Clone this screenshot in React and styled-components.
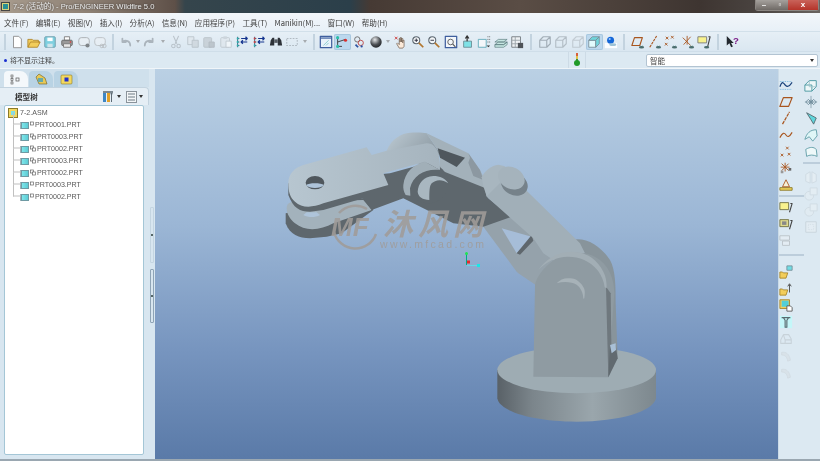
import React from "react";
import styled, { createGlobalStyle } from "styled-components";

const GlobalStyle = createGlobalStyle`
  html, body { margin: 0; padding: 0; height: 100%; overflow: hidden; background: #dfeaf3; }
  #root { height: 100%; }
  * { box-sizing: border-box; }
`;

const cjk = `"Noto Sans CJK SC", "Noto Sans", sans-serif`;

const Window = styled.div`
  width: 820px;
  height: 461px;
  display: flex;
  flex-direction: column;
  font-family: ${cjk};
  color: #444;
  background: #dfeaf3;
  filter: blur(0.35px);
  overflow: hidden;
`;

const TitleBar = styled.div`
  height: 13px;
  flex-shrink: 0;
  display: flex;
  align-items: center;
  padding-left: 1px;
  gap: 3px;
  background: linear-gradient(90deg, #a89c8e 0, #8d8074 90px, #5e5048 175px, #35454c 185px, #2b3f4a 350px, #463a34 370px, #5a4d45 520px, #3e3531 700px, #4a4441 760px, #6a6460 820px);
`;

const TitleText = styled.span`
  font: 7.6px/13px "Liberation Sans", ${cjk};
  color: #efefef;
  text-shadow: 0 0 2px #2a2a2a;
  white-space: nowrap;
`;

const WinControls = styled.div`
  margin-left: auto;
  margin-right: 1px;
  display: flex;
  align-self: flex-start;
  height: 11px;
  border: 1px solid #8b8682;
  border-top: 0;
  border-radius: 0 0 3px 3px;
`;

const WinButton = styled.div`
  width: ${(p) => (p.$close ? "30px" : "16px")};
  display: flex;
  align-items: center;
  justify-content: center;
  color: #fff;
  font: bold 8px/10px "Liberation Sans", sans-serif;
  background: ${(p) => (p.$close ? "linear-gradient(#c9635a, #b5342a)" : "linear-gradient(#a5a19d, #6f6a66)")};
`;

const MenuBar = styled.div`
  height: 18px;
  flex-shrink: 0;
  display: flex;
  align-items: center;
  padding-left: 4px;
  gap: 7.25px;
  background: linear-gradient(#f2f6fa, #e8f0f7);
  font-size: 7.6px;
  color: #3f3f3f;
`;

const ToolRow = styled.div`
  height: 20px;
  flex-shrink: 0;
  display: flex;
  align-items: center;
  padding-left: 1px;
  background: linear-gradient(#e6eff6, #dae7f1);
  border-top: 1px solid #d2e0ea;
`;

const ToolButton = styled.div`
  width: ${(p) => p.$w || 16.6}px;
  height: 16px;
  flex-shrink: 0;
  display: flex;
  align-items: center;
  justify-content: center;
  border-radius: 2px;
  background: ${(p) => (p.$active ? "#bcd8ee" : "transparent")};
  box-shadow: ${(p) => (p.$active ? "inset 0 0 0 1px #a9c8df" : "none")};
  opacity: ${(p) => (p.$dim ? 0.55 : 1)};
`;

const Sep = styled.div`
  width: 2px;
  height: 16px;
  margin: 0 ${(p) => p.$m || 3}px;
  flex-shrink: 0;
  background: #c3d3df;
`;

const StatusRow = styled.div`
  height: 18px;
  flex-shrink: 0;
  display: flex;
  align-items: center;
  padding-left: 4px;
  font-size: 7px;
  color: #444;
  background: #dce9f2;
  border-top: 1px solid #cfdee9;
  border-bottom: 1px solid #f0f5f9;
`;

const Dot = styled.span`
  width: 3px;
  height: 3px;
  margin-right: 3px;
  border-radius: 50%;
  background: #1a2fd0;
`;

const LightCell = styled.div`
  margin-left: auto;
  width: 18px;
  height: 16px;
  display: flex;
  justify-content: center;
  border-left: 1px solid #cddbe6;
  border-right: 1px solid #cddbe6;
`;

const Combo = styled.div`
  width: 172px;
  height: 13px;
  margin: 0 2px 0 60px;
  padding: 0 3px;
  display: flex;
  align-items: center;
  justify-content: space-between;
  background: #fff;
  border: 1px solid #b3c4d2;
  border-radius: 2px;
  font-size: 7.6px;
`;

const Caret = styled.span`
  width: 0;
  height: 0;
  border: 2px solid transparent;
  border-top: 3px solid ${(p) => p.$c || "#333"};
  border-bottom: 0;
  flex-shrink: 0;
`;

const Workspace = styled.div`
  flex: 1;
  min-height: 0;
  display: flex;
`;

const Sidebar = styled.div`
  width: 155px;
  flex-shrink: 0;
  display: flex;
  background: #d8e6f0;
`;

const SidePanel = styled.div`
  width: 149px;
  display: flex;
  flex-direction: column;
`;

const Tabs = styled.div`
  height: 18px;
  display: flex;
  padding: 2px 0 0 4px;
  gap: 1px;
  background: #cfe0ec;
`;

const Tab = styled.div`
  width: 24px;
  display: flex;
  align-items: center;
  justify-content: center;
  border-radius: 4px 8px 0 0;
  background: ${(p) => (p.$active ? "#f4f8fb" : "#b9d3e4")};
`;

const PanelHead = styled.div`
  height: 18px;
  display: flex;
  align-items: center;
  padding: 0 5px 0 15px;
  background: #e5eef5;
  border-top: 1px solid #c3d3df;
  border-right: 1px solid #c3d3df;
  border-radius: 0 4px 0 0;
`;

const HeadTitle = styled.span`
  font-size: 7.6px;
  font-weight: 700;
  color: #333;
  margin-right: auto;
`;

const HeadTool = styled.div`
  display: flex;
  align-items: center;
  gap: 2px;
  margin-left: 5px;
`;

const TreeBox = styled.div`
  flex: 1;
  min-height: 0;
  margin: 0 5px 4px 4px;
  padding: 1px 0 0 3px;
  background: #fff;
  border: 1px solid #a4c6d6;
  border-radius: 2px;
`;

const TreeRow = styled.div`
  height: 12px;
  display: flex;
  align-items: center;
  padding-left: ${(p) => (p.$root ? 0 : 5)}px;
  font: 7.1px/12px "Liberation Sans", sans-serif;
  color: #5a5a5a;
`;

const RootGlyph = styled.svg`
  margin-right: 2px;
  flex-shrink: 0;
`;

const LinkGlyph = styled.svg`
  margin-left: 1px;
  flex-shrink: 0;
`;

const Branch = styled.span`
  width: 8px;
  height: 12px;
  flex-shrink: 0;
  margin-top: -12px;
  border-left: 1px solid #c0c0c0;
  border-bottom: 1px solid #c0c0c0;
  transform: translateY(-0.5px);
`;

const PartGlyph = styled.span`
  width: 8px;
  height: 7px;
  flex-shrink: 0;
  background: linear-gradient(90deg, #7fe6ea, #5ccbd4);
  border: 1px solid #6f9aa3;
  box-shadow: -1px 0 0 #9fb1b8;
`;

const Sash = styled.div`
  flex: 1;
  display: flex;
  flex-direction: column;
  align-items: center;
  padding-top: 138px;
  gap: 6px;
`;

const SashHandle = styled.div`
  width: 4px;
  height: ${(p) => (p.$strong ? 54 : 56)}px;
  display: flex;
  align-items: center;
  justify-content: center;
  border: 1px solid ${(p) => (p.$strong ? "#8fa4b6" : "#c4d5e1")};
  border-radius: 1px;
`;

const SashDot = styled.span`
  width: 2px;
  height: 2px;
  background: #566;
`;

const Viewport = styled.div`
  flex: 1;
  min-width: 0;
  height: 390px;
  background: linear-gradient(#bad0e4 0, #9bb6d5 40%, #7795bf 72%, #5a7aa8 100%);
`;

const Scene = styled.svg`
  display: block;
  width: 623px;
  height: 390px;
`;

const Rail = styled.div`
  width: 42px;
  flex-shrink: 0;
  display: flex;
  gap: 10px;
  padding-top: 8px;
  background: #dce9f2;
  border-left: 1px solid #cbdbe7;
`;

const RailCol = styled.div`
  width: ${(p) => p.$w}px;
  display: flex;
  flex-direction: column;
  align-items: center;
`;

const RailBtn = styled.div`
  width: 16px;
  height: 16.6px;
  flex-shrink: 0;
  display: flex;
  align-items: center;
  justify-content: center;
  opacity: ${(p) => (p.$dim ? 0.4 : 1)};
`;

const RailDiv = styled.div`
  width: ${(p) => p.$w}px;
  height: 2px;
  flex-shrink: 0;
  align-self: flex-start;
  margin: ${(p) => p.$m};
  background: #bccddb;
`;

const BottomEdge = styled.div`
  height: 2px;
  flex-shrink: 0;
  background: #9aa7b1;
`;

/* toolbar and rail pictures, all on a 16 unit grid */
const I = ({ children, s = 14 }) => (
  <svg width={s} height={s} viewBox="0 0 16 16" fill="none" strokeLinejoin="round">
    {children}
  </svg>
);

const cube = (c = "#7d8a94", fill = "none") => (
  <path d="M2 6h8v8H2zM2 6l4-4h8v8l-4 4M10 6l4-4" stroke={c} strokeWidth="1.3" fill={fill} />
);

const datum = (d) => (
  <>
    {d}
    <path d="M10 11l2 2 2-2-2 3z" fill="#2f7f7a" />
    <ellipse cx="12" cy="14" rx="3" ry="1.4" fill="#4b6e6e" />
  </>
);

const icons = {
  new: <path d="M4 1.5h6l3 3v10H4z" fill="#fff" stroke="#8a8a8a" />,
  open: <path d="M1 5h5l1 1h6v2h2l-3 6H1zM1 14l3-6h11" fill="#f2cd5b" stroke="#b0862a" />,
  save: (
    <>
      <rect x="2" y="2" width="12" height="12" rx="1" fill="#7fd0e0" stroke="#6a9aa8" />
      <rect x="5" y="3" width="6" height="4" fill="#fff" />
      <rect x="5" y="10" width="6" height="4" fill="#cfe4ea" />
    </>
  ),
  print: (
    <>
      <path d="M5 2h6v4H5z" fill="#fff" stroke="#777" />
      <rect x="2" y="6" width="12" height="6" rx="1" fill="#9a9a9a" stroke="#666" />
      <rect x="4" y="10" width="8" height="4" fill="#e8e8e8" stroke="#777" />
      <circle cx="12" cy="8" r=".9" fill="#d33" />
    </>
  ),
  cam: (
    <>
      <rect x="2" y="3" width="12" height="9" rx="3" fill="#eef2f5" stroke="#777" />
      <circle cx="12" cy="12" r="2.4" fill="#333" />
    </>
  ),
  camDim: (
    <>
      <rect x="2" y="3" width="12" height="9" rx="3" fill="#eef2f5" stroke="#999" />
      <circle cx="10" cy="12.5" r="2" stroke="#999" />
      <circle cx="13" cy="12.5" r="2" stroke="#999" />
    </>
  ),
  undo: <path d="M14 12c0-5-5-7-9-4M5 8V4M5 8h4" stroke="#808890" strokeWidth="2" strokeLinecap="round" />,
  redo: <path d="M2 12c0-5 5-7 9-4M11 8V4M11 8H7" stroke="#808890" strokeWidth="2" strokeLinecap="round" />,
  cut: (
    <>
      <path d="M5 1l4 9M11 1L7 10" stroke="#9aa2a8" strokeWidth="1.3" />
      <circle cx="5" cy="12.5" r="2" stroke="#9aa2a8" strokeWidth="1.2" />
      <circle cx="11" cy="12.5" r="2" stroke="#9aa2a8" strokeWidth="1.2" />
    </>
  ),
  copy: (
    <>
      <rect x="2" y="2" width="7" height="9" fill="#dfe5ea" stroke="#9aa2a8" />
      <rect x="7" y="6" width="7" height="8" fill="#c5ccd2" stroke="#9aa2a8" />
    </>
  ),
  paste: (
    <>
      <rect x="2" y="3" width="9" height="11" rx="1" fill="#b8bfc5" stroke="#9aa2a8" />
      <rect x="8" y="8" width="6" height="6" fill="#a2a9af" stroke="#8e959b" />
    </>
  ),
  pasteSp: (
    <>
      <rect x="2" y="3" width="10" height="11" rx="1" fill="#dfe5ea" stroke="#a7aeb4" />
      <rect x="8" y="7" width="6" height="7" fill="#fff" stroke="#a7aeb4" />
      <rect x="5" y="1.5" width="4" height="3" fill="#bcc3c9" />
    </>
  ),
  regen: (
    <>
      <path d="M3 2v12M3 4h2M3 8h2M3 12h2" stroke="#357" />
      <path d="M2 3h2v2H2z" fill="#2ab6b0" />
      <path d="M2 7h2v2H2z" fill="#2ab6b0" />
      <path d="M2 11h2v2H2z" fill="#2ab6b0" />
      <path d="M7 4h7M12 2l2 2-2 2M14 8H7M9 6L7 8l2 2" stroke="#14348e" strokeWidth="1.4" />
    </>
  ),
  regenRed: (
    <>
      <path d="M3 2v12M3 4h2M3 8h2M3 12h2" stroke="#357" />
      <path d="M2 3h2v2H2z" fill="#d23b3b" />
      <path d="M2 7h2v2H2z" fill="#d23b3b" />
      <path d="M2 11h2v2H2z" fill="#2ab6b0" />
      <path d="M7 4h7M12 2l2 2-2 2M14 8H7M9 6L7 8l2 2" stroke="#14348e" strokeWidth="1.4" />
    </>
  ),
  binoculars: (
    <>
      <path d="M2 6l2-3h2v9H1zM14 6l-2-3h-2v9h5z" fill="#2d3238" />
      <rect x="6" y="5" width="4" height="4" fill="#555b62" />
    </>
  ),
  select: <rect x="2" y="4" width="12" height="8" stroke="#8a939b" strokeWidth="1.2" strokeDasharray="2 1.4" />,
  frame: (
    <>
      <rect x="1.5" y="1.5" width="13" height="13" fill="#e9f2fa" stroke="#3f5f9e" strokeWidth="1.4" />
      <path d="M2 3.5h12" stroke="#3f5f9e" strokeWidth="1.4" />
      <path d="M5 12l6-6M8 12l3-3" stroke="#7fc7c9" />
    </>
  ),
  axes: (
    <>
      <path d="M3 3v10h5M3 8l9-3" stroke="#333" />
      <circle cx="3" cy="3" r="1.8" fill="#2bbfa8" />
      <circle cx="3" cy="13" r="1.8" fill="#2bbfa8" />
      <circle cx="12" cy="6" r="1.8" fill="#d93030" />
    </>
  ),
  csys: (
    <>
      <circle cx="6" cy="5" r="3" stroke="#666" />
      <circle cx="10" cy="9" r="3" stroke="#bb4444" />
      <path d="M4 11l3 3" stroke="#2a50a0" strokeWidth="2" />
      <circle cx="11" cy="13" r="1.3" fill="#2a50a0" />
    </>
  ),
  sphere: (
    <>
      <defs>
        <radialGradient id="sph" cx=".4" cy=".3" r=".8">
          <stop offset="0" stopColor="#e6e8ea" />
          <stop offset=".55" stopColor="#4c5054" />
          <stop offset="1" stopColor="#15171a" />
        </radialGradient>
      </defs>
      <circle cx="8" cy="8" r="6.5" fill="url(#sph)" />
    </>
  ),
  hand: (
    <>
      <path d="M6 15l-3-5 1-1 2 2V4h1v4-5h1.5v5-4H10v5-3h1.5v7L10 15z" fill="#fbe9d8" stroke="#6b5a4c" strokeWidth=".8" />
      <path d="M1 2l3 3M4 2L1 5" stroke="#c33" />
    </>
  ),
  zoomIn: (
    <>
      <circle cx="6" cy="6" r="4" fill="#f3f6f8" stroke="#5c6770" strokeWidth="1.2" />
      <path d="M9 9l5 5" stroke="#b2762e" strokeWidth="2" />
      <path d="M4 6h4M6 4v4" stroke="#223" />
    </>
  ),
  zoomOut: (
    <>
      <circle cx="6" cy="6" r="4" fill="#f3f6f8" stroke="#5c6770" strokeWidth="1.2" />
      <path d="M9 9l5 5" stroke="#b2762e" strokeWidth="2" />
      <path d="M4 6h4" stroke="#223" />
    </>
  ),
  refit: (
    <>
      <rect x="1.5" y="1.5" width="13" height="13" fill="#f2f6fa" stroke="#3f5f9e" strokeWidth="1.4" />
      <circle cx="7.5" cy="8" r="3.2" stroke="#555" />
      <path d="M10 10.5l3 3" stroke="#555" strokeWidth="1.4" />
    </>
  ),
  orient: (
    <>
      <rect x="3" y="7" width="9" height="7" fill="#7fe1e6" stroke="#6a8d95" />
      <path d="M7 7V2M5 4l2-3 2 3" stroke="#333" strokeWidth="1.4" />
    </>
  ),
  views: (
    <>
      <rect x="1.5" y="5" width="9" height="9" fill="#f4f7fa" stroke="#5ea8b8" />
      <path d="M12 2h3M12 5h3M12 8h3" stroke="#555" strokeDasharray="1 1" />
      <path d="M11 12l2 2 2-2z" fill="#333" />
    </>
  ),
  layers: <path d="M1 8l4-3h10l-4 3zM1 11l4-3h10l-4 3zM1 14l0-3 10 0 4-3v3l-4 3z" fill="#c6e6e2" stroke="#5f7f82" strokeWidth=".8" />,
  table: (
    <>
      <rect x="2" y="2" width="10" height="12" fill="#eef1f4" stroke="#71787e" />
      <path d="M2 6h10M2 10h10M6 2v12" stroke="#9aa2a8" />
      <rect x="9" y="9" width="6" height="6" fill="#4e5358" />
    </>
  ),
  wire: cube("#6f7b85"),
  hidden: cube("#909aa2"),
  noHidden: cube("#a9b1b8"),
  shaded: (
    <>
      <path d="M2 6h8v8H2z" fill="#e2fbfd" stroke="#7d8f99" />
      <path d="M2 6l4-4h8l-4 4zM10 6l4-4v8l-4 4z" fill="#6fd6dd" stroke="#7d8f99" />
    </>
  ),
  spot: (
    <>
      <rect x="1" y="9" width="14" height="6" fill="#fbfdff" />
      <circle cx="7.5" cy="6" r="4" fill="#1467d8" />
      <circle cx="6.5" cy="4.5" r="1.2" fill="#9cc8ff" />
      <ellipse cx="10" cy="11" rx="4" ry="1.5" fill="#9dc3d6" />
    </>
  ),
  dPlane: datum(<path d="M1 12L4 3h9l-3 9z" fill="none" stroke="#a8551e" strokeWidth="1.3" />),
  dAxis: datum(<path d="M2 14L10 1" stroke="#a8551e" strokeWidth="1.3" strokeDasharray="3 1" />),
  dPoint: datum(<path d="M2 2l3 3M5 2L2 5M8 1l3 3M11 1L8 4M1 9l3 3M4 9l-3 3" stroke="#a8551e" />),
  dCsys: datum(<path d="M2 3l9 9M11 2l-8 9M7 1v10" stroke="#a8551e" />),
  note: (
    <>
      <rect x="1" y="2" width="10" height="7" fill="#f8f28e" stroke="#777" />
      <path d="M13 2h2l-3 12" stroke="#444" strokeWidth="1.2" />
      <ellipse cx="11" cy="14" rx="3" ry="1.4" fill="#4b6e6e" />
    </>
  ),
  help: (
    <>
      <path d="M2 1v11l3-2.5L7 14l2-1-2-4h3z" fill="#22282e" />
      <text x="9" y="10" fontFamily="Liberation Sans" fontWeight="700" fontSize="11" fill="#7a1a86">?</text>
    </>
  ),
  sketch: (
    <>
      <path d="M1 10c3-8 4-4 6-2s4 3 8-3" stroke="#18407a" strokeWidth="1.3" />
      <path d="M1 13h14M1 4h14" stroke="#6fb2de" strokeDasharray="1 1" />
    </>
  ),
  railPlane: <path d="M1 13L5 3h10l-4 10z" stroke="#a8551e" strokeWidth="1.4" />,
  railAxis: <path d="M4 15L12 1" stroke="#a8551e" strokeWidth="1.4" strokeDasharray="4 1" />,
  curve: <path d="M1 11c3-6 5-6 7-3s4 2 7-3" stroke="#a8551e" strokeWidth="1.3" />,
  pts: <path d="M8 2l3 3M11 2L8 5M2 10l3 3M5 10l-3 3M10 9l3 3M13 9l-3 3" stroke="#a8551e" />,
  spark: (
    <>
      <path d="M7 2v10M2 7h10M3 3l8 8M11 3l-8 8" stroke="#a8551e" />
      <rect x="11" y="8" width="3" height="3" fill="#666" />
      <rect x="2" y="11" width="3" height="3" fill="#999" />
    </>
  ),
  weld: (
    <>
      <rect x="1" y="11" width="14" height="3" fill="#ecd05a" stroke="#8b7a2a" />
      <path d="M8 2l-4 8h8z" fill="#f5f0d8" stroke="#a8551e" />
    </>
  ),
  note2: (
    <>
      <rect x="1" y="3" width="10" height="8" fill="#f8f28e" stroke="#6f6f40" />
      <path d="M13 4h2l-3 10" stroke="#444" strokeWidth="1.2" />
    </>
  ),
  note3: (
    <>
      <rect x="1" y="3" width="10" height="8" fill="#ded98e" stroke="#6f6f40" />
      <rect x="3.5" y="5" width="5" height="4" fill="#888" />
      <path d="M13 4h2l-3 10" stroke="#444" strokeWidth="1.2" />
    </>
  ),
  note4: (
    <>
      <rect x="1" y="2" width="11" height="5" fill="#eef2f5" stroke="#888" />
      <rect x="4" y="8" width="8" height="5" fill="#eef2f5" stroke="#888" />
    </>
  ),
  folderSq: (
    <>
      <path d="M1 8h3l1 1h5l-2 6H1z" fill="#f2cd5b" stroke="#a8862a" />
      <rect x="9" y="1" width="6" height="5" fill="#6fdde4" stroke="#78909a" />
    </>
  ),
  folderUp: (
    <>
      <path d="M1 8h3l1 1h5l-2 6H1z" fill="#f2cd5b" stroke="#a8862a" />
      <path d="M12 12V3M10 5l2-3 2 3" stroke="#444" />
    </>
  ),
  partDoc: (
    <>
      <rect x="1" y="2" width="11" height="10" fill="#f2cd5b" stroke="#a8862a" />
      <rect x="3" y="3" width="8" height="7" fill="#52cfd8" />
      <path d="M9 9h4l2 2v4H9z" fill="#fff" stroke="#555" />
    </>
  ),
  funnel: (
    <>
      <rect x="1" y="1" width="14" height="14" fill="#c4f7f9" />
      <path d="M3 3h10M5 3l2 3v8h2V6l2-3" stroke="#5a6a70" strokeWidth="1.3" />
    </>
  ),
  ghost: <path d="M2 9l3-6h6l3 5v5H2zM5 3l2 6h7M7 9v4" stroke="#aab0b5" strokeWidth="1.2" />,
  arc: <path d="M3 5c5-1 9 2 10 9l-3 1c-1-5-3-7-7-7z" fill="#d4d9dd" stroke="#c0c6ca" />,
  boxSkew: (
    <>
      <path d="M1 8h8v7H1zM1 8l5-5h8v7l-5 5" stroke="#4f9aa4" fill="#eef7f8" strokeWidth="1.1" />
      <path d="M6 3v7h8" stroke="#9fc4ca" />
    </>
  ),
  mirror: (
    <>
      <circle cx="8" cy="8" r="2.2" stroke="#6d8a9a" />
      <path d="M8 1v14M1 8h14" stroke="#8ba3b0" />
      <path d="M2 8l3-3 3 3-3 3zM14 8l-3-3-3 3 3 3z" stroke="#6d8a9a" />
    </>
  ),
  sweep: <path d="M3 2l11 6-3 7-3-5z" fill="#5fd5dc" stroke="#57666c" />,
  surfA: <path d="M1 13C3 6 7 2 14 2l1 7-5 6-4-5z" fill="#dff6f7" stroke="#5d9aa5" />,
  surfB: <path d="M2 5c5-3 9-3 12 0l1 8c-4-2-9-2-12 0z" fill="#eef8f9" stroke="#5d9aa5" />,
  mirrorD: <path d="M7 2L2 5v8l5 2zM9 2l5 3v8l-5 2z" stroke="#b8c3ca" fill="#eef3f6" />,
  unionD: (
    <>
      <circle cx="6" cy="10" r="5" stroke="#bcc6cc" fill="#e8eef2" />
      <rect x="7" y="1" width="8" height="8" stroke="#bcc6cc" fill="#eef3f6" />
    </>
  ),
  gridD: (
    <>
      <rect x="2" y="2" width="12" height="12" fill="#eef2f5" stroke="#a9b3ba" />
      <path d="M5 5h6v6H5z" stroke="#c2cad0" strokeDasharray="1 1" />
    </>
  ),
};

const Icon = ({ name, s }) => <I s={s}>{icons[name]}</I>;

const toolbarItems = [
  "|", "new", "open", "save", "print", "cam", "camDim", "|",
  "undo", "^", "redo", "^", "cut", "copy", "paste", "pasteSp", "regen", "regenRed", "binoculars", "select", "^", "|",
  "frame", "*axes", "csys", "sphere", "^", "hand", "zoomIn", "zoomOut", "refit", "orient", "views", "layers", "table", "||",
  "wire", "hidden", "noHidden", "*shaded", "spot", "||",
  "dPlane", "dAxis", "dPoint", "dCsys", "note", "||", "help",
];

const dimmed = ["camDim", "cam", "undo", "redo", "cut", "copy", "paste", "pasteSp", "select", "wire", "hidden", "noHidden"];

const railLeft = [
  "sketch", "railPlane", "railAxis", "curve", "pts", "spark", "weld", "-", "note2", "note3", "~note4", "=",
  "folderSq", "folderUp", "partDoc", "funnel", "~ghost", "~arc", "~arc",
];
const railRight = ["boxSkew", "mirror", "sweep", "surfA", "surfB", "+", "~mirrorD", "~unionD", "~unionD", "~gridD"];

const parts = [
  ["PRT0001.PRT", 0],
  ["PRT0003.PRT", 1],
  ["PRT0002.PRT", 1],
  ["PRT0003.PRT", 1],
  ["PRT0002.PRT", 1],
  ["PRT0003.PRT", 0],
  ["PRT0002.PRT", 0],
];

const menus = ["文件(F)", "编辑(E)", "视图(V)", "插入(I)", "分析(A)", "信息(N)", "应用程序(P)", "工具(T)", "Manikin(M)...", "窗口(W)", "帮助(H)"];

const shade = "#5e676d";

/* the model is traced on a 3x grid, the group scales it down to window pixels */
const RobotArm = () => (
  <g transform="translate(115 51) scale(.33333)">
    <defs>
      <linearGradient id="baseSide" x1="0" x2="1" y1="0" y2="0">
        <stop offset="0" stopColor="#596167" />
        <stop offset=".22" stopColor="#7b858b" />
        <stop offset=".6" stopColor="#9aa6ac" />
        <stop offset="1" stopColor="#7d888e" />
      </linearGradient>
      <linearGradient id="elbowRound" x1="0" x2="1" y1="0" y2=".6">
        <stop offset="0" stopColor="#bccad3" />
        <stop offset="1" stopColor="#8a97a0" />
      </linearGradient>
      <linearGradient id="plateFade" x1="0" x2="1" y1="0" y2="0">
        <stop offset="0" stopColor="#b7c6d0" />
        <stop offset="1" stopColor="#a6b4be" />
      </linearGradient>
    </defs>

    {/* base */}
    <path d="M682 750v85c6 40 110 70 238 70s230-30 238-70v-85z" fill="url(#baseSide)" />
    <ellipse cx="920" cy="750" rx="238" ry="70" fill="#9eacb3" />

    {/* rear upright */}
    <path d="M905 360c40-10 85 15 115 60 17 30 17 80 17 130l6 165-28 57-100-200z" fill="#88949b" />

    {/* lower jaw */}
    <path d="M47 280v30c13 35 40 45 73 45l50-5 45-10 95-70-10-40z" fill={shade} />
    <path d="M50 265c0-15 10-20 25-20l205-5 25 30-115 40c-40 22-85 25-115 0-15-12-25-28-25-45z" fill="#a3b2bc" />
    <path d="M100 285c15 8 35 8 50 0l-10-8h-30z" fill="#aec4da" />

    {/* jaw sides and dark elbow body */}
    <path d="M55 190v35c15 40 35 50 65 50l40-5 120-35 25 35 95-35 30 15 120 60 90 10 50 10 35-40-70-55 20-25-145-60-45-25-125 35z" fill={shade} />

    {/* link behind the elbow, with its window */}
    <path d="M350 92c15-37 45-52 70-54 25-2 40 0 50 2l40 60-40 40z" fill="url(#elbowRound)" />
    <path d="M470 40l125 60 35 50 30 60-150-60 0-50z" fill="#a3b1ba" />
    <path d="M503 85l82 28-25 28-50-28z" fill="#4f575d" />
    <path d="M595 100l35 50 10 30-30-12-15-40 5-15z" fill="#8c98a1" />

    {/* elbow joint under the plate */}
    <circle cx="475" cy="190" r="60" fill={shade} />
    <path d="M400 195c5-40 30-62 65-70l45 25c-45-5-80 15-90 55l1 22-14-2c-6-10-8-20-7-30z" fill="#a1afb8" />

    {/* top plate */}
    <path d="M55 190c0-30 20-47 45-55l190-53 15 23 45-13 120-22c20 0 30 15 35 30 5 20 5 35 5 50l-45-25-125 35 15 35-195 55c-35 14-65 14-85-5-15-12-20-30-20-55z" fill="url(#plateFade)" />
    <ellipse cx="135" cy="188" rx="28" ry="20" fill="#4f575d" />
    <path d="M108 195c8 12 45 12 54 0-10-7-44-7-54 0z" fill="#adc3d9" />

    {/* elbow pin */}
    <path d="M443 215c2-25 17-45 47-47 20 0 35 7 45 22-20-15-40-10-50 0-7 8-7 25-7 50-20-2-33-8-35-25z" fill="#a9b7c0" />

    {/* forearm bands */}
    <path d="M640 320l85-30 125 45 85 70-130 95-60-40-5-5z" fill="#95a2ab" />
    <path d="M695 325l90 25-45 50z" fill="#a6bdd8" />
    <path d="M740 400l45-55 5 17-40 42z" fill="#5f676d" />
    <path d="M640 180l130 10v22l160 158 15 30-65 40-60-40-30-45-140-125z" fill="#a1afb8" />

    {/* wrist pin */}
    <path d="M635 172c10-22 30-35 50-38l20 5-15 50-40 40-10-30z" fill="#a8b6bf" />
    <ellipse cx="733" cy="192" rx="42" ry="33" transform="rotate(28 733 192)" fill="#76828a" />
    <path d="M690 160l72 30 5 22-75-30z" fill="#76828a" />
    <ellipse cx="724" cy="174" rx="42" ry="32" transform="rotate(28 724 174)" fill="#a5b3bc" />

    {/* front upright */}
    <path d="M795 495c5-25 25-50 50-70 30-25 60-30 100-25 45 10 75 40 85 90 2 10 2 20 3 30l-18 252-225-2z" fill="#8f9ba2" />
    <path d="M1008 500l7 272 10-32-3-220z" fill="#6f787e" />
    <path d="M1015 772l28-57-6-40-17 0z" fill="#616a70" />
    <path d="M1020 675l17-5 1 20-13 10z" fill="#a9c0d6" />
    <path d="M805 450c25-35 60-55 100-55 40 0 75 20 95 60 8 15 10 30 10 50l-6-3c-2-20-10-35-20-50-25-30-55-42-90-42-35 0-65 15-89 40z" fill="#a2aeb5" />
    <path d="M860 490c10-12 25-17 40-15 20 0 35 15 42 30 3 8 3 15 1 30l-3 1c0-18-8-33-20-42-15-9-40-10-60-4z" fill="#a7b2b8" />
  </g>
);

const Watermark = () => (
  <g transform="translate(-155 -69)" fill="#a09c99" opacity=".88">
    <path d="M334 232a22 22 0 0 0 42 2M339 213a22 22 0 0 1 28-4" stroke="#a09c99" strokeWidth="2.5" fill="none" />
    <text x="331" y="236" fontFamily="Liberation Sans" fontStyle="italic" fontWeight="700" fontSize="26">MF</text>
    <text x="383" y="235" fontFamily="Noto Sans CJK SC" fontWeight="700" fontStyle="italic" fontSize="30" letterSpacing="5">沐风网</text>
    <text x="380" y="248" fontFamily="Liberation Sans" fontSize="10.5" letterSpacing="2.3">www.mfcad.com</text>
  </g>
);

const Triad = () => (
  <g transform="translate(-155 -69)">
    <path d="M466.5 254v11" stroke="#0a8" strokeWidth="1" />
    <path d="M467 265.5h11" stroke="#67d6e6" strokeWidth="1" />
    <rect x="465" y="252" width="3" height="3" rx="1.5" fill="#1ee650" />
    <rect x="477" y="264" width="3" height="3" fill="#19e6e6" />
    <rect x="467" y="260.5" width="3" height="3" fill="#ea2a2a" />
  </g>
);

const ModelTreeIcon = () => (
  <svg width="12" height="11" viewBox="0 0 12 11" fill="none">
    <rect x="1" y="1" width="2" height="2" stroke="#555" strokeWidth=".6" />
    <rect x="1" y="4.5" width="2" height="2" stroke="#555" strokeWidth=".6" />
    <rect x="1" y="8" width="2" height="2" stroke="#555" strokeWidth=".6" />
    <path d="M2 3v1.5M2 6.5V8" stroke="#555" strokeWidth=".6" />
    <rect x="6" y="4" width="3" height="3" stroke="#555" strokeWidth=".7" />
  </svg>
);

const FolderTabIcon = () => (
  <svg width="13" height="12" viewBox="0 0 13 12">
    <path d="M1 4l3-3 6 4 2 6H4z" fill="#e8c957" stroke="#6d5d20" strokeWidth=".6" />
    <rect x="3" y="5" width="5" height="4" fill="#6aa" />
  </svg>
);

const LayerTabIcon = () => (
  <svg width="13" height="11" viewBox="0 0 13 11">
    <rect x="1" y="1" width="11" height="9" rx="1" fill="#f2d860" stroke="#8b7a2a" strokeWidth=".6" />
    <rect x="4.5" y="3.5" width="4" height="4" fill="#2431c8" />
  </svg>
);

const ToolsIcon = () => (
  <svg width="13" height="13" viewBox="0 0 13 13">
    <rect x="1" y="1" width="3" height="11" fill="#3d86c5" />
    <rect x="5" y="3" width="3" height="9" fill="#e2a028" />
    <path d="M9 12V5l-1-3h3l-1 3v7z" fill="#5d6a74" />
    <rect x="1" y="1" width="10" height="2" fill="#7a8791" />
  </svg>
);

const ListIcon = () => (
  <svg width="11" height="12" viewBox="0 0 11 12" fill="none">
    <rect x=".5" y=".5" width="10" height="11" fill="#f3f6f8" stroke="#8a939b" />
    <path d="M2 3h7M2 6h7M2 9h7" stroke="#6d7a84" />
  </svg>
);

const LightIcon = () => (
  <svg width="8" height="15" viewBox="0 0 8 15">
    <rect x="3" y="1" width="2" height="3" fill="#d9603c" />
    <rect x="3" y="4" width="2" height="3" fill="#e0c24a" />
    <rect x="3" y="7" width="2" height="2" fill="#3d8f3d" />
    <circle cx="4" cy="11" r="3" fill="#1f9a28" />
  </svg>
);

const railEntry = (name, i) => {
  if (name === "-") return <RailDiv key={i} $w={25} $m="2px 0" />;
  if (name === "=") return <RailDiv key={i} $w={25} $m="5px 0 8px" />;
  if (name === "+") return <RailDiv key={i} $w={17} $m="2px 0 5px" />;
  const dim = name[0] === "~";
  return (
    <RailBtn key={i} $dim={dim}>
      <Icon name={dim ? name.slice(1) : name} />
    </RailBtn>
  );
};

export default function App() {
  return (
    <>
      <GlobalStyle />
      <Window>
        <TitleBar>
          <svg width="9" height="9" viewBox="0 0 9 9">
            <rect x=".5" y=".5" width="8" height="8" fill="#d9d27a" stroke="#444" />
            <rect x="2" y="2" width="5" height="5" fill="#2a8f95" />
          </svg>
          <TitleText>7-2 (活动的) - Pro/ENGINEER Wildfire 5.0</TitleText>
          <WinControls>
            <WinButton>–</WinButton>
            <WinButton>▫</WinButton>
            <WinButton $close>x</WinButton>
          </WinControls>
        </TitleBar>
        <MenuBar>
          {menus.map((m) => (
            <span key={m}>{m}</span>
          ))}
        </MenuBar>
        <ToolRow>
          {toolbarItems.map((t, i) => {
            if (t === "|") return <Sep key={i} />;
            if (t === "||") return <Sep key={i} $m={4.3} />;
            if (t === "^")
              return (
                <ToolButton key={i} $w={9} $dim>
                  <Caret $c="#777" />
                </ToolButton>
              );
            const active = t[0] === "*";
            const name = active ? t.slice(1) : t;
            return (
              <ToolButton key={i} $active={active} $dim={dimmed.includes(name)}>
                <Icon name={name} />
              </ToolButton>
            );
          })}
        </ToolRow>
        <StatusRow>
          <Dot />
          <span>将不显示注释。</span>
          <LightCell>
            <LightIcon />
          </LightCell>
          <Combo>
            <span>智能</span>
            <Caret />
          </Combo>
        </StatusRow>
        <Workspace>
          <Sidebar>
            <SidePanel>
              <Tabs>
                <Tab $active>
                  <ModelTreeIcon />
                </Tab>
                <Tab>
                  <FolderTabIcon />
                </Tab>
                <Tab>
                  <LayerTabIcon />
                </Tab>
              </Tabs>
              <PanelHead>
                <HeadTitle>模型树</HeadTitle>
                <HeadTool>
                  <ToolsIcon />
                  <Caret />
                </HeadTool>
                <HeadTool>
                  <ListIcon />
                  <Caret />
                </HeadTool>
              </PanelHead>
              <TreeBox>
                <TreeRow $root>
                  <RootGlyph width="10" height="10" viewBox="0 0 10 10">
                    <rect x=".5" y=".5" width="9" height="9" fill="#f2d860" stroke="#8b7a2a" />
                    <rect x="3" y="3" width="4" height="4" fill="#7fe1e6" />
                  </RootGlyph>
                  7-2.ASM
                </TreeRow>
                {parts.map(([label, linked], i) => (
                  <TreeRow key={i}>
                    <Branch />
                    <PartGlyph />
                    <LinkGlyph width={linked ? 7 : 5} height="9" viewBox={linked ? "0 0 7 9" : "0 0 5 9"} fill="none">
                      <rect x=".5" y="1" width="3" height="3" fill="#fff" stroke="#666" strokeWidth=".7" />
                      {linked ? <rect x="2.5" y="3" width="3" height="3" fill="#fff" stroke="#666" strokeWidth=".7" /> : null}
                    </LinkGlyph>
                    {label}
                  </TreeRow>
                ))}
              </TreeBox>
            </SidePanel>
            <Sash>
              <SashHandle>
                <SashDot />
              </SashHandle>
              <SashHandle $strong>
                <SashDot />
              </SashHandle>
            </Sash>
          </Sidebar>
          <Viewport>
            <Scene viewBox="0 0 623 390">
              <RobotArm />
              <Watermark />
              <Triad />
            </Scene>
          </Viewport>
          <Rail>
            <RailCol $w={14}>{railLeft.map(railEntry)}</RailCol>
            <RailCol $w={16}>{railRight.map(railEntry)}</RailCol>
          </Rail>
        </Workspace>
        <BottomEdge />
      </Window>
    </>
  );
}
